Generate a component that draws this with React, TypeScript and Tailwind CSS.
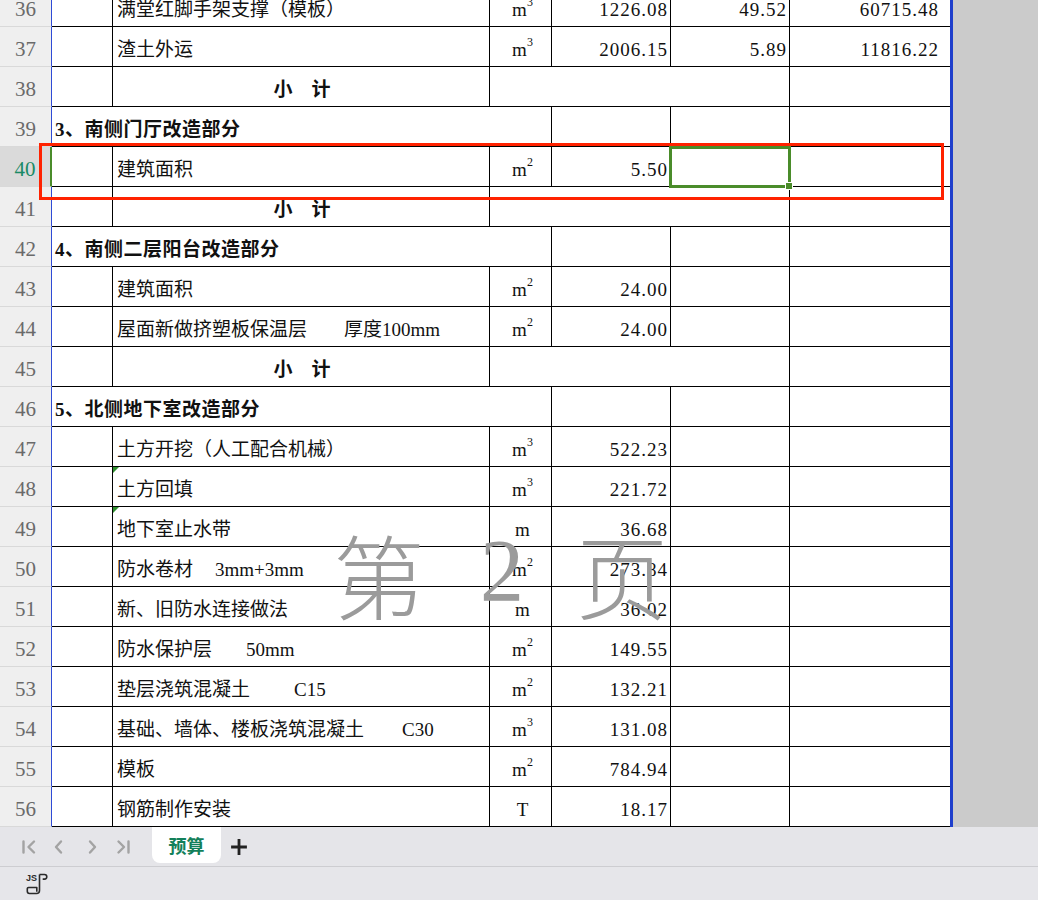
import React from 'react';

type R = {
  n: number;
  k: 'item' | 'sub' | 'head';
  t?: string;
  s?: string;
  gap?: number;
  u?: string;
  sup?: string;
  d?: string;
  e?: string;
  f?: string;
  sel?: boolean;
  tri?: boolean;
};

const rows: R[] = [
  { n: 36, k: 'item', t: '满堂红脚手架支撑（模板）', u: 'm', sup: '3', d: '1226.08', e: '49.52', f: '60715.48' },
  { n: 37, k: 'item', t: '渣土外运', u: 'm', sup: '3', d: '2006.15', e: '5.89', f: '11816.22' },
  { n: 38, k: 'sub' },
  { n: 39, k: 'head', t: '3、南侧门厅改造部分' },
  { n: 40, k: 'item', t: '建筑面积', u: 'm', sup: '2', d: '5.50', sel: true },
  { n: 41, k: 'sub' },
  { n: 42, k: 'head', t: '4、南侧二层阳台改造部分' },
  { n: 43, k: 'item', t: '建筑面积', u: 'm', sup: '2', d: '24.00' },
  { n: 44, k: 'item', t: '屋面新做挤塑板保温层', s: '厚度100mm', gap: 37, u: 'm', sup: '2', d: '24.00' },
  { n: 45, k: 'sub' },
  { n: 46, k: 'head', t: '5、北侧地下室改造部分' },
  { n: 47, k: 'item', t: '土方开挖（人工配合机械）', u: 'm', sup: '3', d: '522.23' },
  { n: 48, k: 'item', t: '土方回填', u: 'm', sup: '3', d: '221.72', tri: true },
  { n: 49, k: 'item', t: '地下室止水带', u: 'm', d: '36.68', tri: true },
  { n: 50, k: 'item', t: '防水卷材', s: '3mm+3mm', gap: 22, u: 'm', sup: '2', d: '273.84' },
  { n: 51, k: 'item', t: '新、旧防水连接做法', u: 'm', d: '36.02' },
  { n: 52, k: 'item', t: '防水保护层', s: '50mm', gap: 34, u: 'm', sup: '2', d: '149.55' },
  { n: 53, k: 'item', t: '垫层浇筑混凝土', s: 'C15', gap: 44, u: 'm', sup: '2', d: '132.21' },
  { n: 54, k: 'item', t: '基础、墙体、楼板浇筑混凝土', s: 'C30', gap: 38, u: 'm', sup: '3', d: '131.08' },
  { n: 55, k: 'item', t: '模板', u: 'm', sup: '2', d: '784.94' },
  { n: 56, k: 'item', t: '钢筋制作安装', u: 'T', d: '18.17' },
];

const cell = 'h-full border-b border-r border-black flex items-end pb-[5px] leading-[22px]';

function Num({ v }: { v?: string }) {
  return (
    <div className={`${cell} w-[119px] justify-end pr-[2px] tracking-[1px]`}>{v ?? ''}</div>
  );
}

function Row({ r }: { r: R }) {
  const header = r.sel
    ? 'bg-[#dadada] text-[#1b8a66] border-r-[2px] border-r-[#4a8c2a]'
    : 'bg-[#efefef] text-[#6a6a6a] border-r border-r-[#2f4bd6]';
  return (
    <div className="flex h-[40px]">
      <div
        className={`w-[52px] h-full shrink-0 border-b border-b-[#d9d9d9] flex items-center justify-center pt-[6px] text-[21px] font-['Liberation_Serif',serif] ${header}`}
      >
        {r.n}
      </div>
      {r.k === 'head' ? (
        <>
          <div className={`${cell} w-[500px] pl-[3px] font-bold tracking-[0.5px]`}>{r.t}</div>
          <Num />
          <Num />
          <div className="h-full w-[160px] border-b border-black" />
        </>
      ) : r.k === 'sub' ? (
        <>
          <div className={`${cell} w-[61px]`} />
          <div className={`${cell} w-[377px] justify-center font-bold`}>
            <span className="pl-[2px]">小　计</span>
          </div>
          <div className={`${cell} w-[300px]`} />
          <div className="h-full w-[160px] border-b border-black" />
        </>
      ) : (
        <>
          <div className={`${cell} w-[61px]`} />
          <div className={`${cell} w-[377px] pl-[4px] relative whitespace-nowrap`}>
            {r.tri && (
              <span className="absolute left-0 top-0 w-0 h-0 border-t-[6px] border-t-[#2f8f2f] border-r-[6px] border-r-transparent" />
            )}
            <span>{r.t}</span>
            {r.s && (
              <>
                <span style={{ width: r.gap }} className="inline-block" />
                <span>{r.s}</span>
              </>
            )}
          </div>
          <div className={`${cell} w-[62px] justify-center`}>
            <span className="pl-[4px]">
              {r.u}
              {r.sup && <span className="relative -top-[10px] text-[12px] leading-none">{r.sup}</span>}
            </span>
          </div>
          <Num v={r.d} />
          <div className={`${cell} w-[119px] justify-end pr-[2px] tracking-[1px] relative`}>
            {r.e ?? ''}
            {r.sel && (
              <>
                <span className="absolute -left-[2px] -top-[1px] -right-[2px] -bottom-[2px] border-[3px] border-[#4a8c2a]" />
                <span className="absolute -right-[3px] -bottom-[3px] w-[6px] h-[6px] bg-[#4a8c2a] outline outline-1 outline-white" />
              </>
            )}
          </div>
          <div className="h-full w-[160px] border-b border-black flex items-end justify-end pb-[5px] pr-[11px] leading-[22px] tracking-[1px]">
            {r.f ?? ''}
          </div>
        </>
      )}
    </div>
  );
}

export default function App() {
  return (
    <div className="w-[1038px] h-[900px] flex flex-col overflow-hidden bg-white font-['Liberation_Serif','Noto_Sans_CJK_SC',serif] text-[19px] text-[#111]">
      <div className="relative h-[827px] shrink-0 overflow-hidden flex">
        <div className="w-[950px] shrink-0 -mt-[13px] flex flex-col">
          {rows.map((r) => (
            <Row key={r.n} r={r} />
          ))}
        </div>
        <div className="w-[3px] shrink-0 bg-[#1f3fcc]" />
        <div className="flex-1 bg-[#cbcbcb]" />

        <div className="absolute left-[39px] top-[143px] w-[905px] h-[57px] border-[3px] border-[#ff2200] pointer-events-none" />

        <div className="absolute left-[333px] top-[527px] flex items-start text-[#9b9b9b] pointer-events-none leading-none">
          <span className="font-['Noto_Sans_CJK_SC',sans-serif] text-[92px] font-light leading-none">第</span>
          <span className="ml-[55px] font-['Liberation_Serif',serif] text-[88px] leading-none">2</span>
          <span className="ml-[52px] font-['Noto_Sans_CJK_SC',sans-serif] text-[92px] font-light leading-none">页</span>
        </div>
      </div>

      <div className="h-[39px] shrink-0 bg-[#e5e5e9] flex items-center font-['Noto_Sans_CJK_SC',sans-serif]">
        <svg className="ml-[21px]" width="16" height="16" viewBox="0 0 16 16" fill="none" stroke="#a3a3a3" strokeWidth="2.4" strokeLinecap="round" strokeLinejoin="round">
          <path d="M2.5 2.5v11M13 2.5l-5.5 5.5 5.5 5.5" />
        </svg>
        <svg className="ml-[14px]" width="16" height="16" viewBox="0 0 16 16" fill="none" stroke="#a3a3a3" strokeWidth="2.4" strokeLinecap="round" strokeLinejoin="round">
          <path d="M10 2.5l-5 5.5 5 5.5" />
        </svg>
        <svg className="ml-[17px]" width="16" height="16" viewBox="0 0 16 16" fill="none" stroke="#a3a3a3" strokeWidth="2.4" strokeLinecap="round" strokeLinejoin="round">
          <path d="M6 2.5l5 5.5-5 5.5" />
        </svg>
        <svg className="ml-[15px]" width="16" height="16" viewBox="0 0 16 16" fill="none" stroke="#a3a3a3" strokeWidth="2.4" strokeLinecap="round" strokeLinejoin="round">
          <path d="M3.5 2.5l5.5 5.5-5.5 5.5M13.5 2.5v11" />
        </svg>
        <div className="ml-[21px] self-start w-[69px] h-[36px] bg-white rounded-b-[8px] flex items-center justify-center text-[18px] font-bold text-[#13805a]">
          预算
        </div>
        <svg className="ml-[10px]" width="16" height="16" viewBox="0 0 16 16" fill="none" stroke="#222" strokeWidth="2.8" strokeLinecap="square">
          <path d="M8 1.5v13M1.5 8h13" />
        </svg>
      </div>

      <div className="h-[34px] shrink-0 bg-[#e6e6ea] border-t border-[#cdcdd1] flex items-center">
        <svg className="ml-[25px]" width="24" height="22" viewBox="0 0 24 22" fill="none" stroke="#2b2b2b" strokeWidth="1.6" strokeLinejoin="round">
          <text x="1" y="8" fontSize="9" fontFamily="Liberation Sans, sans-serif" fontWeight="bold" fill="#2b2b2b" stroke="none">JS</text>
          <path d="M14.5 1.5h5a2.3 2.3 0 0 1 0 4.6h-1.8" />
          <path d="M14.5 1.5v16a3 3 0 0 1-3 3H4.5a2.2 2.2 0 0 1-2.2-2.2v-2.6a1.2 1.2 0 0 1 1.2-1.2h8.3v4.2" />
        </svg>
      </div>
    </div>
  );
}
